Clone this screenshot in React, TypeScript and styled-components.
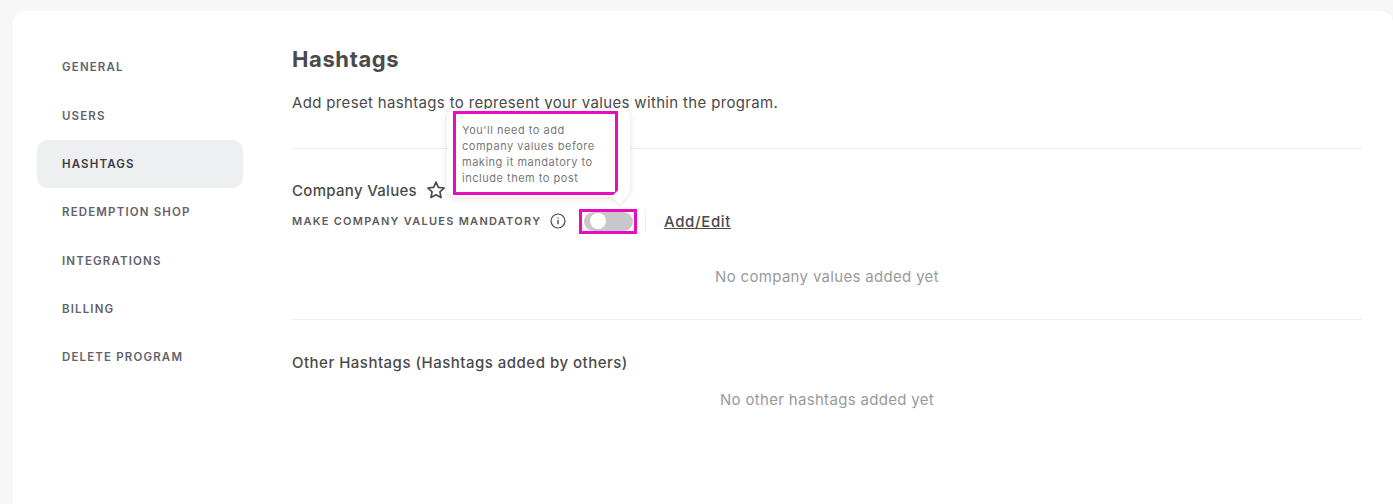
import React from 'react';
import styled, { createGlobalStyle } from 'styled-components';

const GlobalStyle = createGlobalStyle`
  html, body {
    margin: 0;
    height: 504px;
    overflow: hidden;
    background: #f7f7f7;
    font-family: "Inter", "Noto Sans", sans-serif;
    color: #4a4a4a;
  }
`;

const navItems = ['General', 'Users', 'Hashtags', 'Redemption Shop', 'Integrations', 'Billing', 'Delete Program'];

function App(): JSX.Element {
  return (
    <Page>
      <GlobalStyle />
      <Card>
        <Sidebar>
          {navItems.map((item) => (
            <NavItem key={item} $active={item === 'Hashtags'}>
              {item}
            </NavItem>
          ))}
        </Sidebar>
        <Main>
          <Title>Hashtags</Title>
          <Intro>Add preset hashtags to represent your values within the program.</Intro>
          <Section>
            <SectionHead>
              <SectionTitle>Company Values</SectionTitle>
              <svg width="20" height="20" viewBox="0 0 24 24" fill="none" stroke="#4a4a4a" strokeWidth="2" strokeLinejoin="round">
                <path d="M12 2.5l2.9 6.3 6.9.8-5.1 4.7 1.4 6.8-6.1-3.4-6.1 3.4 1.4-6.8-5.1-4.7 6.9-.8z" />
              </svg>
            </SectionHead>
            <ControlRow>
              <MandatoryLabel>Make company values mandatory</MandatoryLabel>
              <InfoIcon width="16" height="16" viewBox="0 0 16 16" fill="none" stroke="#4a4a4a">
                <circle cx="8" cy="8" r="7" strokeWidth="1.2" />
                <path d="M8 7v4.2" strokeWidth="1.4" />
                <path d="M8 4.4v1.2" strokeWidth="1.4" />
              </InfoIcon>
              <ToggleArea>
                <Tooltip>
                  <TooltipText>
                    You'll need to add company values before making it mandatory to include them to post
                  </TooltipText>
                </Tooltip>
                <Toggle>
                  <Knob />
                </Toggle>
              </ToggleArea>
              <RowDivider />
              <AddEdit href="#">Add/Edit</AddEdit>
            </ControlRow>
            <Empty>No company values added yet</Empty>
          </Section>
          <OtherSection>
            <SectionHead>
              <OtherTitle>Other Hashtags (Hashtags added by others)</OtherTitle>
            </SectionHead>
            <EmptyOther>No other hashtags added yet</EmptyOther>
          </OtherSection>
        </Main>
      </Card>
    </Page>
  );
}

const Page = styled.div`
  height: 504px;
  box-sizing: border-box;
  padding: 11px 0 0 13px;
`;

const Card = styled.div`
  width: 1380px;
  height: 493px;
  background: #fff;
  border-radius: 12px 12px 0 0;
  display: flex;
`;

const Sidebar = styled.nav`
  width: 206px;
  margin-left: 24px;
  padding-top: 32.4px;
  display: flex;
  flex-direction: column;
  gap: 0.35px;
`;

const NavItem = styled.div<{ $active?: boolean }>`
  height: 48px;
  padding-left: 25px;
  display: flex;
  align-items: center;
  border-radius: 10px;
  font-size: 11.5px;
  font-weight: 600;
  letter-spacing: 1.15px;
  text-transform: uppercase;
  color: ${({ $active }) => ($active ? '#3b3b42' : '#63636b')};
  background: ${({ $active }) => ($active ? '#eeeff1' : 'transparent')};
`;

const Main = styled.main`
  width: 1070px;
  margin-left: 49px;
  padding-top: 32px;
`;

const Title = styled.h1`
  margin: 0;
  height: 32px;
  line-height: 32px;
  font-size: 22px;
  font-weight: 700;
  letter-spacing: 0.6px;
  color: #4a4a4a;
`;

const Intro = styled.p`
  margin: 16px 0 0;
  height: 24px;
  line-height: 24px;
  font-size: 15px;
  letter-spacing: 0.34px;
  color: #4a4a4a;
`;

const Section = styled.section`
  border-top: 1px solid #eeeeee;
  margin-top: 33px;
  padding-top: 29px;
`;

const OtherSection = styled(Section)`
  margin-top: 30px;
  padding-top: 30px;
`;

const SectionHead = styled.div`
  height: 24px;
  display: flex;
  align-items: center;
  gap: 9px;
`;

const SectionTitle = styled.h2`
  margin: 0;
  font-size: 15px;
  font-weight: 500;
  letter-spacing: 0.3px;
  color: #4a4a4a;
`;

const OtherTitle = styled(SectionTitle)`
  letter-spacing: 0.49px;
`;

const ControlRow = styled.div`
  height: 24px;
  margin-top: 7px;
  display: flex;
  align-items: center;
`;

const MandatoryLabel = styled.span`
  width: 249px;
  font-size: 11px;
  font-weight: 600;
  letter-spacing: 1.27px;
  text-transform: uppercase;
  white-space: nowrap;
  color: #5c5c5c;
`;

const InfoIcon = styled.svg`
  margin-left: 9px;
`;

const ToggleArea = styled.div`
  position: relative;
  width: 58px;
  height: 25px;
  margin-left: 13px;
  box-sizing: border-box;
  border: 3px solid #e80cc0;
  display: flex;
  align-items: center;
  justify-content: center;
`;

const Toggle = styled.div`
  width: 49px;
  height: 19px;
  border-radius: 10px;
  background: #c8c8ca;
  display: flex;
  align-items: center;
  padding-left: 6px;
  box-sizing: border-box;
  flex-shrink: 0;
`;

const Knob = styled.div`
  width: 16px;
  height: 16px;
  border-radius: 50%;
  background: #fff;
`;

const Tooltip = styled.div`
  position: absolute;
  left: -135px;
  bottom: 34px;
  width: 183px;
  height: 88px;
  box-sizing: border-box;
  padding: 2px 0 0 6px;
  background: #fff;
  border-radius: 8px;
  box-shadow: 0 1px 6px rgba(0, 0, 0, 0.13);
  &::after {
    content: '';
    position: absolute;
    right: 5px;
    bottom: -5px;
    width: 11px;
    height: 11px;
    background: #fff;
    transform: rotate(45deg);
    box-shadow: 2px 2px 3px rgba(0, 0, 0, 0.06);
  }
`;

const TooltipText = styled.div`
  width: 165px;
  height: 84px;
  box-sizing: border-box;
  border: 3px solid #e80cc0;
  padding: 8px 16px 0 6px;
  font-size: 11px;
  letter-spacing: 0.52px;
  line-height: 16px;
  color: #77777a;
`;

const RowDivider = styled.div`
  width: 1px;
  height: 24px;
  margin-left: 8px;
  background: #efefef;
`;

const AddEdit = styled.a`
  margin-left: 18px;
  font-size: 15px;
  font-weight: 500;
  letter-spacing: 0.65px;
  color: #4a4a4a;
  text-decoration: underline;
`;

const Empty = styled.div`
  margin-top: 32px;
  height: 24px;
  line-height: 24px;
  text-align: center;
  font-size: 15px;
  letter-spacing: 0.32px;
  color: #9a9a9a;
`;

const EmptyOther = styled(Empty)`
  margin-top: 14px;
`;

export default App;
